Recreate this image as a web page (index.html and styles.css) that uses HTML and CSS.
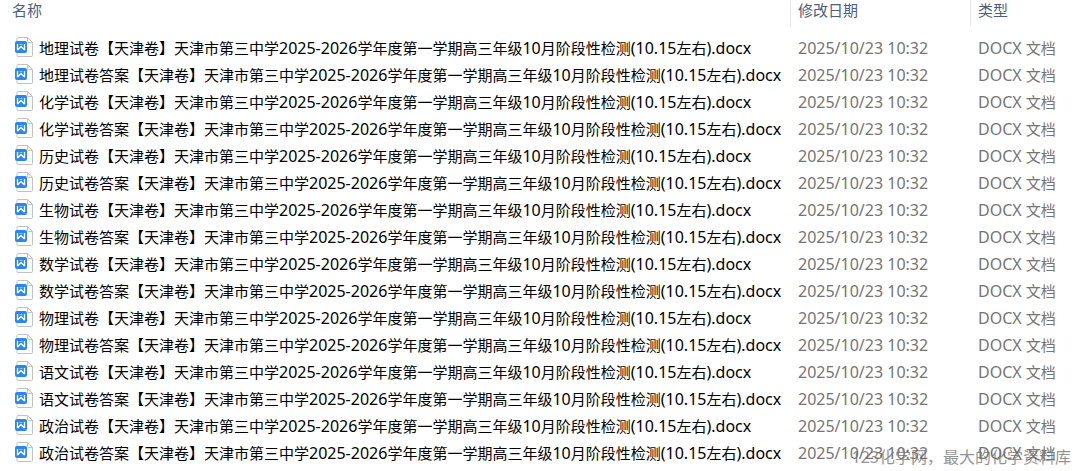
FILE: index.html
```html
<!DOCTYPE html>
<html lang="zh-CN">
  <head>
    <meta charset="UTF-8" />
    <title>试卷文件</title>
    <link rel="stylesheet" href="styles.css">
  </head>
  <body>
    <svg class="sprite" aria-hidden="true">
      <symbol id="docx" viewBox="0 0 19 20">
        <path d="M4 .5h9.500l5 5v13a1 1 0 0 1-1 1h-13.500a1 1 0 0 1-1-1v-17a1 1 0 0 1 1-1z" fill="#fff" stroke="#bfc3c8" />
        <path d="M13.500 .5v4a1 1 0 0 0 1 1h4z" fill="#f8eee8" stroke="#c9c1bd" />
        <rect x="1" y="4" width="12" height="12" rx="2" fill="#2888f0" />
        <path d="M3.500 7v5.500h.500l3-3 3 3h.500v-5.500" fill="none" stroke="#fff" stroke-width="1.300" />
        <path d="M5.500 7.500h3" fill="none" stroke="#8cc0f8" />
      </symbol>
    </svg>

    <table class="file-list">
      <colgroup>
        <col />
        <col class="col-date" />
        <col class="col-type" />
      </colgroup>
      <thead>
        <tr>
          <th>名称</th>
          <th>修改日期</th>
          <th>类型</th>
        </tr>
      </thead>
      <tbody id="files"></tbody>
    </table>

    <div class="watermark">123化学网，最大的化学资料库</div>

    <script src="files.js"></script>
  </body>
</html>
```
FILE: files.js
```js
const subjects = ['地理', '化学', '历史', '生物', '数学', '物理', '语文', '政治'];
const kinds = ['试卷', '试卷答案'];
const suffix = '【天津卷】天津市第三中学2025-2026学年度第一学期高三年级10月阶段性检测(10.15左右).docx';

// 西文比中文大一号
function latin(text) {
  return text.replace(/[\x20-\x7e]+/g, '<span class="latin">$&</span>');
}

let rows = '';
for (const subject of subjects) {
  for (const kind of kinds) {
    rows += `<tr>
      <td class="name"><svg class="icon" aria-hidden="true"><use href="#docx"></use></svg>${latin(subject + kind + suffix)}</td>
      <td>${latin('2025/10/23 10:32')}</td>
      <td>${latin('DOCX 文档')}</td>
    </tr>`;
  }
}
document.getElementById('files').innerHTML = rows;
```
FILE: styles.css
```css
body {
  position: relative;
  margin: 0;
  background: #fff;
  font-family: 'Noto Sans', 'Noto Sans CJK SC', sans-serif;
  font-size: 15px;
}

.sprite {
  display: none;
}

.file-list {
  width: 100%;
  table-layout: fixed;
  border-collapse: separate;
  border-spacing: 0;
}

.col-date {
  width: 180px;
}

.col-type {
  width: 108px;
}

th {
  height: 26px;
  padding: 0 0 0 7px;
  border-left: 1px solid #e3e6ea;
  color: #4c607a;
  font-weight: normal;
  line-height: 20px;
  text-align: left;
  vertical-align: top;
}

th:first-child {
  padding-left: 12px;
  border-left: 0;
}

thead::after {
  content: '';
  display: block;
  height: 9px;
}

td {
  height: 27px;
  padding: 0 0 0 8px;
  color: #757575;
  line-height: 27px;
  white-space: nowrap;
}

.name {
  padding-left: 14px;
  color: #000;
}

.latin {
  font-size: 16px;
  line-height: 1;
}

.icon {
  width: 19px;
  height: 20px;
  margin-right: 6px;
  vertical-align: -3px;
}

.watermark {
  position: absolute;
  right: 7px;
  bottom: 0;
  color: rgba(110, 110, 110, 0.75);
  font-size: 16px;
  line-height: 20px;
}
```
